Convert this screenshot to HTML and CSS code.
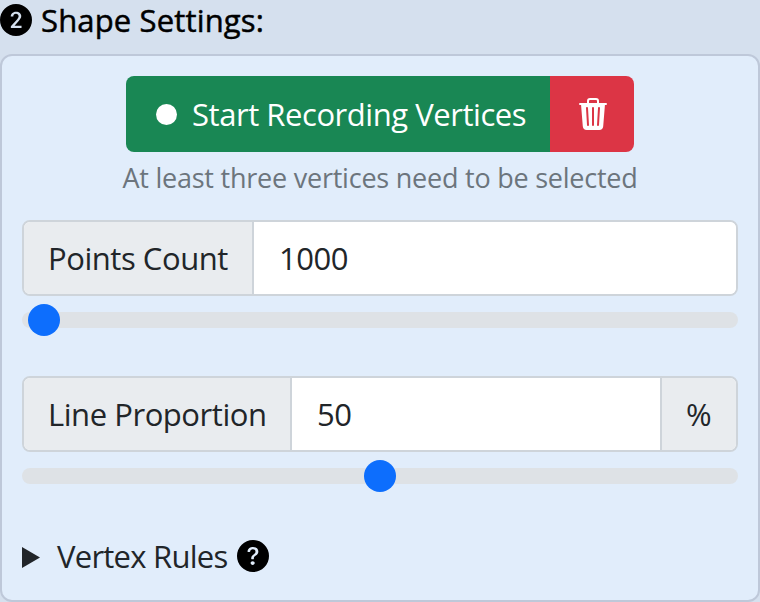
FILE: index.html
```html
<!DOCTYPE html>
<html lang="en">
<head>
<meta charset="utf-8">
<title>Shape Settings</title>
<link rel="stylesheet" href="styles.css">
</head>
<body>
<header class="heading">
  <svg class="icon" viewBox="0 0 16 16"><path d="M16 8A8 8 0 1 1 0 8a8 8 0 0 1 16 0M6.646 6.24c0-.691.493-1.306 1.336-1.306.756 0 1.313.492 1.313 1.236 0 .697-.469 1.23-.902 1.705l-2.971 3.293V12h5.344v-1.107H7.268v-.077l1.974-2.22.096-.107c.688-.763 1.287-1.428 1.287-2.43 0-1.266-1.031-2.215-2.613-2.215-1.758 0-2.637 1.19-2.637 2.402v.065h1.271v-.07Z"/></svg>
  <span class="title">Shape Settings:</span>
</header>
<main class="card">
  <div class="buttons">
    <button class="btn record"><span class="dot"></span><span class="record-label">Start Recording Vertices</span></button>
    <button class="btn trash" aria-label="Clear"><svg class="icon" viewBox="0 0 16 16"><path d="M11 1.5v1h3.5a.5.5 0 0 1 0 1h-.538l-.853 10.66A2 2 0 0 1 11.115 16h-6.23a2 2 0 0 1-1.994-1.84L2.038 3.5H1.5a.5.5 0 0 1 0-1H5v-1A1.5 1.5 0 0 1 6.5 0h3A1.5 1.5 0 0 1 11 1.5m-5 0v1h4v-1a.5.5 0 0 0-.5-.5h-3a.5.5 0 0 0-.5.5M4.5 5.029l.5 8.5a.5.5 0 1 0 .998-.06l-.5-8.5a.5.5 0 1 0-.998.06m6.53-.528a.5.5 0 0 0-.528.47l-.5 8.5a.5.5 0 0 0 .998.058l.5-8.5a.5.5 0 0 0-.47-.528M8 4.5a.5.5 0 0 0-.5.5v8.5a.5.5 0 0 0 1 0V5a.5.5 0 0 0-.5-.5"/></svg></button>
  </div>
  <p class="hint"><span>At least three vertices need to be selected</span></p>
  <div class="group">
    <label class="addon points" for="points">Points Count</label>
    <input class="field" id="points" type="text" value="1000">
  </div>
  <input class="range" type="range" min="0" max="100" step="any" value="0.877" aria-label="Points Count">
  <div class="group second">
    <label class="addon line" for="line">Line Proportion</label>
    <input class="field" id="line" type="text" value="50">
    <span class="addon percent">%</span>
  </div>
  <input class="range" type="range" min="0" max="100" value="50" aria-label="Line Proportion">
  <div class="rules">
    <svg class="marker" viewBox="0 0 18 21"><path d="M0 0L18 10.5L0 21Z"/></svg>
    <span class="rules-label">Vertex Rules</span>
    <svg class="icon" viewBox="0 0 16 16"><path d="M16 8A8 8 0 1 1 0 8a8 8 0 0 1 16 0M5.496 6.033h.825c.138 0 .248-.113.266-.25.09-.656.54-1.134 1.342-1.134.686 0 1.314.343 1.314 1.168 0 .635-.374.927-.965 1.371-.673.489-1.206 1.06-1.168 1.987l.003.217a.25.25 0 0 0 .25.246h.811a.25.25 0 0 0 .25-.25v-.105c0-.718.273-.927 1.01-1.486.609-.463 1.244-.977 1.244-2.056 0-1.511-1.276-2.241-2.673-2.241-1.267 0-2.655.59-2.75 2.286a.237.237 0 0 0 .241.247m2.325 6.443c.61 0 1.029-.394 1.029-.927 0-.552-.42-.94-1.029-.94-.584 0-1.009.388-1.009.94 0 .533.425.927 1.01.927z"/></svg>
  </div>
</main>
</body>
</html>
```
FILE: styles.css
```css
* { box-sizing: border-box; }
body {
  margin: 0;
  height: 602px;
  overflow: hidden;
  background: #d5e0ee;
  color: #212529;
  font: 400 31px/48px "Open Sans", sans-serif;
  letter-spacing: -0.45px;
}
.icon { width: 32px; height: 32px; flex: none; display: block; fill: #000; }
.heading { display: flex; height: 54px; padding-top: 4px; gap: 9px; color: #000; }
.title {
  font-weight: 500;
  line-height: 33px;
  letter-spacing: 0.15px;
  white-space: nowrap;
  -webkit-text-stroke: 0.5px #000;
}
.card {
  height: 548px;
  padding: 20px;
  border: 2px solid #bec8d9;
  border-radius: 12px;
  background: #e1edfb;
}
.buttons { display: flex; justify-content: center; height: 76px; }
.btn {
  display: flex;
  align-items: center;
  padding: 0;
  border: 0;
  color: #fff;
  font: inherit;
  letter-spacing: inherit;
  white-space: nowrap;
}
.record { width: 424px; padding-left: 30px; background: #198754; border-radius: 8px 0 0 8px; }
.dot { width: 21px; height: 21px; margin-right: 15px; border-radius: 50%; background: #fff; }
.trash { width: 84px; justify-content: center; background: #dc3545; border-radius: 0 8px 8px 0; }
.trash .icon { fill: #fff; margin-left: 2px; }
.hint {
  margin: 5px 0 0;
  height: 42px;
  color: #6c757d;
  font-size: 27px;
  line-height: 42px;
  letter-spacing: -0.23px;
  text-align: center;
  white-space: nowrap;
}
.group {
  display: flex;
  height: 76px;
  margin-top: 21px;
  border: 2px solid #ced4da;
  border-radius: 8px;
  background: #fff;
  overflow: hidden;
}
.second { margin-top: 40px; }
.addon {
  display: flex;
  align-items: center;
  flex: none;
  padding-left: 24px;
  background: #e9ecef;
  border-right: 2px solid #ced4da;
  white-space: nowrap;
}
.points { width: 230px; }
.line { width: 268px; }
.percent { width: 76px; border-right: 0; border-left: 2px solid #ced4da; }
.field {
  flex: 1;
  min-width: 0;
  padding: 0 25px;
  border: 0;
  outline: 0;
  color: inherit;
  font: inherit;
  letter-spacing: inherit;
}
.range {
  display: block;
  width: 100%;
  height: 32px;
  margin: 8px 0 0;
  appearance: none;
  background: transparent;
}
.range::-webkit-slider-runnable-track { height: 16px; border-radius: 8px; background: #dee2e6; }
.range::-webkit-slider-thumb {
  appearance: none;
  width: 32px;
  height: 32px;
  margin-top: -8px;
  border-radius: 50%;
  background: #0d6efd;
}
.rules { display: flex; align-items: center; height: 48px; margin-top: 40px; }
.marker { width: 18px; height: 21px; margin: 2px 17px 0 0; fill: #212529; }
.rules-label { width: 180px; letter-spacing: -0.75px; white-space: nowrap; }
```
